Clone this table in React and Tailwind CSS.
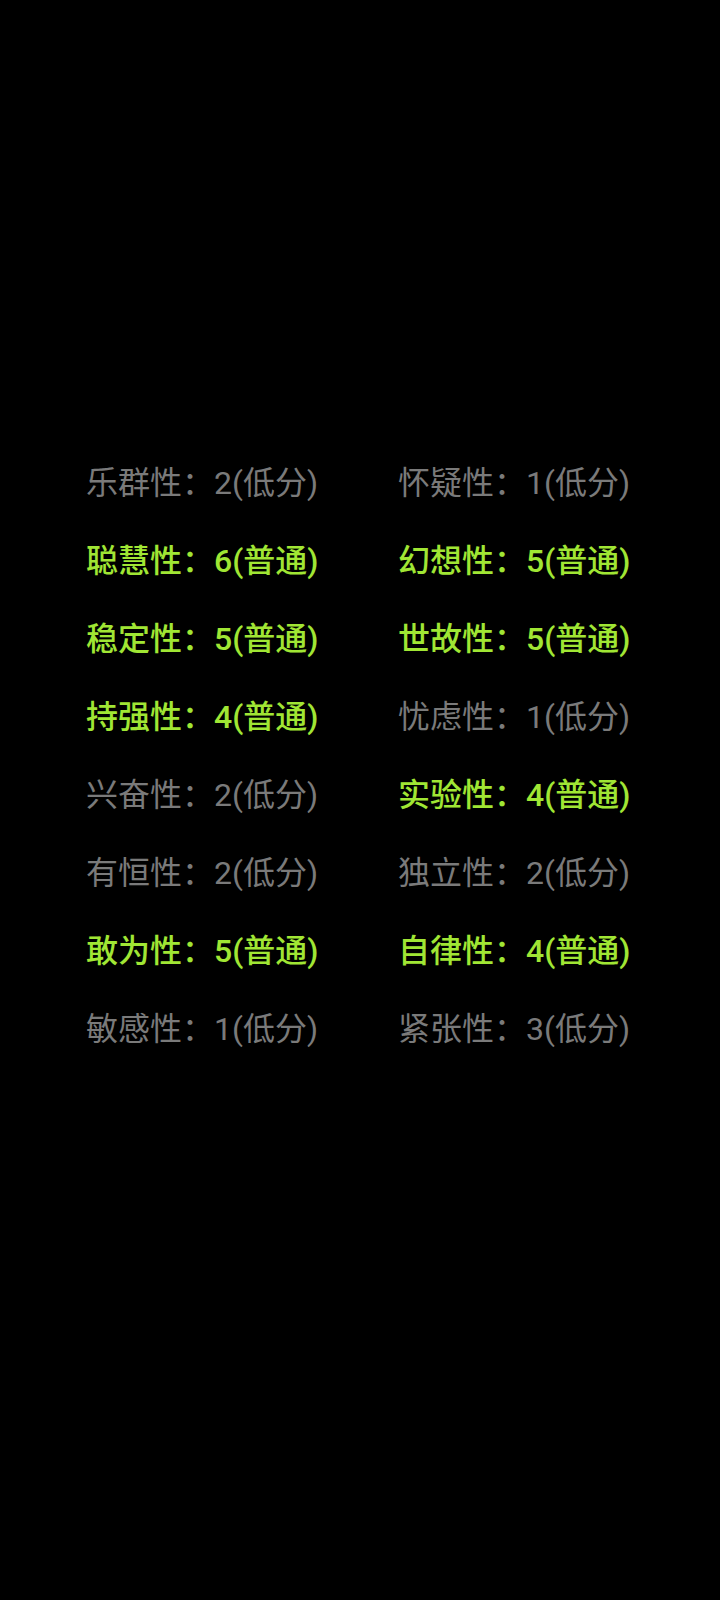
import React from 'react';

const rows = [
  [['乐群性', 2, false], ['怀疑性', 1, false]],
  [['聪慧性', 6, true], ['幻想性', 5, true]],
  [['稳定性', 5, true], ['世故性', 5, true]],
  [['持强性', 4, true], ['忧虑性', 1, false]],
  [['兴奋性', 2, false], ['实验性', 4, true]],
  [['有恒性', 2, false], ['独立性', 2, false]],
  [['敢为性', 5, true], ['自律性', 4, true]],
  [['敏感性', 1, false], ['紧张性', 3, false]],
];

function Item({ name, score, ok }) {
  return (
    <div className={ok ? 'text-[#a0e634] font-medium' : 'text-[#7a7a7a]'}>
      {name}：{score}({ok ? '普通' : '低分'})
    </div>
  );
}

export default function App() {
  return (
    <div
      className="bg-black w-[720px] h-[1600px] pt-[444px] pl-[86px]"
      style={{ fontFamily: 'Roboto, "Noto Sans CJK SC", sans-serif' }}
    >
      <div className="grid grid-cols-[312px_1fr] text-[32px] leading-[78px]">
        {rows.map((r, i) => (
          <React.Fragment key={i}>
            <Item name={r[0][0]} score={r[0][1]} ok={r[0][2]} />
            <Item name={r[1][0]} score={r[1][1]} ok={r[1][2]} />
          </React.Fragment>
        ))}
      </div>
    </div>
  );
}
